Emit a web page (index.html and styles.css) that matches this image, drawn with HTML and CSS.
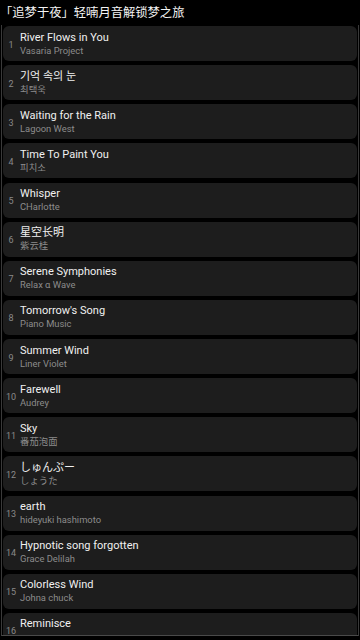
FILE: index.html
```html
<!DOCTYPE html>
<html lang="zh">
<head>
<meta charset="utf-8">
<title>追梦于夜</title>
<link rel="stylesheet" href="styles.css">
</head>
<body>
<header class="title">「追梦于夜」轻喃月音解锁梦之旅</header>
<div class="frame">
  <span class="edge edge-blue"></span>
  <span class="edge edge-red r1"></span>
  <span class="edge edge-red r2"></span>
  <span class="edge edge-red r3"></span>
  <span class="edge edge-red r4"></span>
  <ul class="list">
    <li class="song"><span class="num">1</span><div class="info"><div class="name">River Flows in You</div><div class="artist">Vasaria Project</div></div></li>
    <li class="song"><span class="num">2</span><div class="info"><div class="name">기억 속의 눈</div><div class="artist">최택욱</div></div></li>
    <li class="song"><span class="num">3</span><div class="info"><div class="name">Waiting for the Rain</div><div class="artist">Lagoon West</div></div></li>
    <li class="song"><span class="num">4</span><div class="info"><div class="name">Time To Paint You</div><div class="artist">피치소</div></div></li>
    <li class="song"><span class="num">5</span><div class="info"><div class="name">Whisper</div><div class="artist">CHarlotte</div></div></li>
    <li class="song"><span class="num">6</span><div class="info"><div class="name">星空长明</div><div class="artist">紫云桂</div></div></li>
    <li class="song"><span class="num">7</span><div class="info"><div class="name">Serene Symphonies</div><div class="artist">Relax α Wave</div></div></li>
    <li class="song"><span class="num">8</span><div class="info"><div class="name">Tomorrow's Song</div><div class="artist">Piano Music</div></div></li>
    <li class="song"><span class="num">9</span><div class="info"><div class="name">Summer Wind</div><div class="artist">Liner Violet</div></div></li>
    <li class="song"><span class="num">10</span><div class="info"><div class="name">Farewell</div><div class="artist">Audrey</div></div></li>
    <li class="song"><span class="num">11</span><div class="info"><div class="name">Sky</div><div class="artist">番茄泡面</div></div></li>
    <li class="song"><span class="num">12</span><div class="info"><div class="name">しゅんぷー</div><div class="artist">しょうた</div></div></li>
    <li class="song"><span class="num">13</span><div class="info"><div class="name">earth</div><div class="artist">hideyuki hashimoto</div></div></li>
    <li class="song"><span class="num">14</span><div class="info"><div class="name">Hypnotic song forgotten</div><div class="artist">Grace Delilah</div></div></li>
    <li class="song"><span class="num">15</span><div class="info"><div class="name">Colorless Wind</div><div class="artist">Johna chuck</div></div></li>
    <li class="song"><span class="num">16</span><div class="info"><div class="name">Reminisce</div><div class="artist">&nbsp;</div></div></li>
  </ul>
</div>
</body>
</html>
```
FILE: styles.css
```css
html, body {
  margin: 0;
  padding: 0;
  background: #000;
}
body {
  width: 360px;
  height: 640px;
  overflow: hidden;
  font-family: Roboto, "Noto Sans CJK SC", "Noto Sans CJK KR", "Noto Sans CJK JP", sans-serif;
  color: #ececec;
}
.title {
  height: 25px;
  line-height: 26px;
  font-size: 12.3px;
  padding-left: 0;
  color: #f4f4f4;
  white-space: nowrap;
}
.frame {
  position: relative;
  margin: 0 1px;
  height: 611px;
  border-left: 1px solid #3a3a3a;
  border-right: 1px solid #3a3a3a;
  border-bottom: 1px solid #4a4a4a;
  overflow: hidden;
  box-sizing: border-box;
}
.list {
  list-style: none;
  margin: 0;
  padding: 1px 1px 0 1px;
  display: flex;
  flex-direction: column;
  gap: 4.13px;
}
.song {
  height: 35px;
  flex: none;
  background: #1d1d1d;
  border-radius: 6px;
  display: flex;
  align-items: center;
}
.num {
  width: 16px;
  flex: none;
  text-align: center;
  font-size: 9px;
  color: #8a8a8a;
  padding-top: 2px;
}
.info {
  margin-left: 1px;
  display: flex;
  flex-direction: column;
}
.name {
  font-size: 11px;
  line-height: 13px;
  color: #f0f0f0;
  white-space: nowrap;
}
.artist {
  font-size: 9.4px;
  line-height: 12px;
  margin-top: 1px;
  color: #8c8c8c;
  white-space: nowrap;
}
.edge {
  position: absolute;
  left: -2px;
  width: 2px;
}
.edge-blue {
  top: 8px;
  height: 40px;
  background: #1565c0;
}
.edge-red {
  height: 3px;
  background: #c62828;
}
.r1 { top: 447px; }
.r2 { top: 482px; }
.r3 { top: 511px; }
.r4 { top: 542px; }
```
